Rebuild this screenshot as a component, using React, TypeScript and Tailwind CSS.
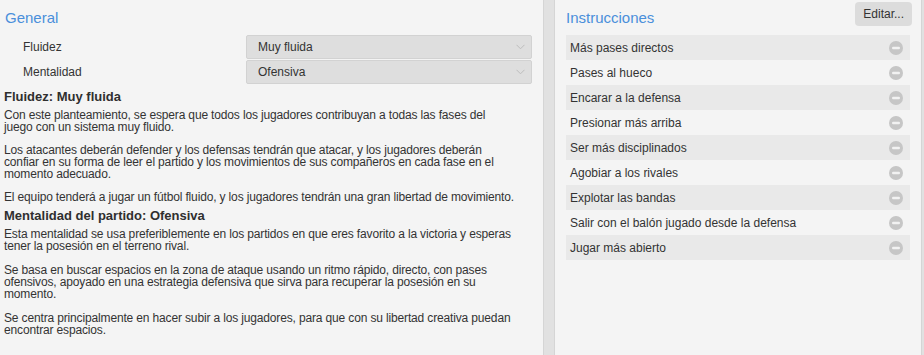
import React from "react";

const instrucciones = [
  "Más pases directos",
  "Pases al hueco",
  "Encarar a la defensa",
  "Presionar más arriba",
  "Ser más disciplinados",
  "Agobiar a los rivales",
  "Explotar las bandas",
  "Salir con el balón jugado desde la defensa",
  "Jugar más abierto",
];

function Chevron() {
  return (
    <svg width="9" height="6" viewBox="0 0 9 6" className="shrink-0">
      <path d="M0.5 0.8 L4.5 4.8 L8.5 0.8" fill="none" stroke="#bdbdbd" strokeWidth="1" />
    </svg>
  );
}

function SelectBox({ value }: { value: string }) {
  return (
    <div className="w-[286px] h-[24px] bg-[#dedede] border border-[#d2d2d2] rounded-[2px] flex items-center justify-between pl-[11px] pr-[6px]">
      <span className="text-[12px] text-[#333]">{value}</span>
      <Chevron />
    </div>
  );
}

function MinusIcon() {
  return (
    <svg width="14" height="14" viewBox="0 0 14 14" className="shrink-0">
      <circle cx="7" cy="7" r="7" fill="#c6c6c6" />
      <rect x="3" y="5.8" width="8" height="2.4" rx="1.2" fill="#f2f2f2" />
    </svg>
  );
}

export default function App() {
  return (
    <div className="flex w-[924px] h-[355px] bg-[#f4f4f4] text-[#333] font-['Liberation_Sans',Arial,sans-serif] overflow-hidden">
      {/* Left panel */}
      <div className="w-[543px] shrink-0 pl-[4px]">
        <div className="h-[35px] flex items-center pl-[1px]">
          <h2 className="text-[15px] text-[#4a8fdb] leading-none">General</h2>
        </div>
        <div className="flex flex-col gap-[1px]">
          <div className="flex items-center h-[24px]">
            <span className="w-[242px] pl-[19px] text-[12px]">Fluidez</span>
            <SelectBox value="Muy fluida" />
          </div>
          <div className="flex items-center h-[24px]">
            <span className="w-[242px] pl-[19px] text-[12px]">Mentalidad</span>
            <SelectBox value="Ofensiva" />
          </div>
        </div>
        <div className="w-[530px]">
          <h3 className="mt-[5px] text-[13px] font-semibold leading-[16px] text-[#2f2f2f]">Fluidez: Muy fluida</h3>
          <div className="mt-[4px] text-[12px] leading-[12px] tracking-[-0.15px] whitespace-nowrap">
            <p>
              Con este planteamiento, se espera que todos los jugadores contribuyan a todas las fases del
              <br />
              juego con un sistema muy fluido.
            </p>
            <p className="mt-[11px]">
              Los atacantes deberán defender y los defensas tendrán que atacar, y los jugadores deberán
              <br />
              confiar en su forma de leer el partido y los movimientos de sus compañeros en cada fase en el
              <br />
              momento adecuado.
            </p>
            <p className="mt-[11px]">El equipo tenderá a jugar un fútbol fluido, y los jugadores tendrán una gran libertad de movimiento.</p>
          </div>
          <h3 className="mt-[5px] text-[13px] font-semibold leading-[16px] text-[#2f2f2f]">Mentalidad del partido: Ofensiva</h3>
          <div className="mt-[4px] text-[12px] leading-[12px] tracking-[-0.15px] whitespace-nowrap">
            <p>
              Esta mentalidad se usa preferiblemente en los partidos en que eres favorito a la victoria y esperas
              <br />
              tener la posesión en el terreno rival.
            </p>
            <p className="mt-[12px]">
              Se basa en buscar espacios en la zona de ataque usando un ritmo rápido, directo, con pases
              <br />
              ofensivos, apoyado en una estrategia defensiva que sirva para recuperar la posesión en su
              <br />
              momento.
            </p>
            <p className="mt-[12px]">
              Se centra principalmente en hacer subir a los jugadores, para que con su libertad creativa puedan
              <br />
              encontrar espacios.
            </p>
          </div>
        </div>
      </div>

      {/* Divider */}
      <div className="w-[12px] shrink-0 bg-[#e1e1e1] border-x border-[#d5d5d5]" />

      {/* Right panel */}
      <div className="w-[366px] shrink-0 pl-[11px] pr-[9px]">
        <div className="h-[35px] flex items-start justify-between">
          <h2 className="mt-[10px] text-[15px] text-[#4a8fdb] leading-none">Instrucciones</h2>
          <button className="mt-[2px] h-[24px] px-[8px] rounded-[4px] bg-[#dcdcdc] text-[12px] text-[#333]">Editar...</button>
        </div>
        <div className="mr-[2px] flex flex-col">
          {instrucciones.map((t, i) => (
            <div
              key={t}
              className={`h-[25px] flex items-center justify-between pl-[4px] pr-[7px] text-[12px] ${i % 2 === 0 ? "bg-[#e9e9e9]" : ""}`}
            >
              <span>{t}</span>
              <MinusIcon />
            </div>
          ))}
        </div>
      </div>

      {/* Right edge */}
      <div className="flex-1 bg-[#e1e1e1] border-l border-[#d5d5d5]" />
    </div>
  );
}
